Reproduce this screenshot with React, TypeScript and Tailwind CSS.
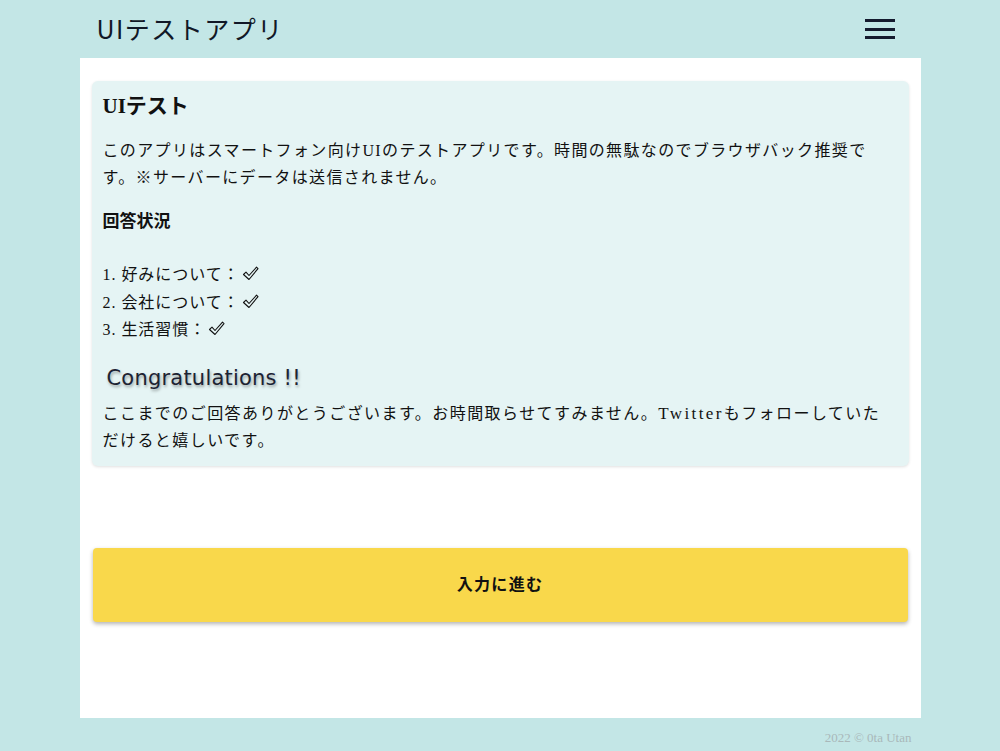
const serif = "font-['Liberation_Serif','Noto_Sans_CJK_JP',serif]"

const answers = ["好みについて", "会社について", "生活習慣"]

// アウトラインのチェックマーク
function Check() {
  return (
    <svg width="17" height="15" viewBox="0 0 17 15" className="ml-[2px] inline-block align-[-1px]">
      <path
        d="M1.5 8.5 L4 6.2 L7 9.5 L14.5 1.2 L16 2.6 L7 13.5 Z"
        fill="none"
        stroke="#111"
        strokeWidth="1.1"
        strokeLinejoin="round"
      />
    </svg>
  )
}

export default function App() {
  return (
    <div className={`min-h-[751px] bg-[#c3e6e6] text-[#111] ${serif}`}>
      {/* ヘッダー */}
      <header className="mx-auto flex h-[58px] w-[841px] items-center justify-between pl-[17px] pr-[26px]">
        <h1 className="text-[25px] tracking-[0.06em] text-[#111827] font-['Noto_Sans_CJK_JP',sans-serif] font-normal">
          UIテストアプリ
        </h1>
        <button className="flex w-[30px] flex-col gap-[5.5px]" aria-label="menu">
          <span className="h-[3px] w-full bg-[#141a2e]" />
          <span className="h-[3px] w-full bg-[#141a2e]" />
          <span className="h-[3px] w-full bg-[#141a2e]" />
        </button>
      </header>

      <main className="mx-auto flex h-[660px] w-[841px] flex-col bg-white px-3 pt-[23px]">
        <section className="rounded-md bg-[#e5f4f4] px-[11px] pb-[12px] pt-[10px] shadow-[0_1px_3px_rgba(0,0,0,0.12)]">
          <h2 className="text-[21px] font-bold leading-[30px]">UIテスト</h2>
          <p className="mt-[17px] text-[16px] leading-[26.5px] tracking-[0.085em]">
            このアプリはスマートフォン向けUIのテストアプリです。時間の無駄なのでブラウザバック推奨です。※サーバーにデータは送信されません。
          </p>
          <h3 className="mt-[17px] text-[17px] font-bold leading-[28px]">回答状況</h3>
          <ol className="mt-[25px] text-[16px] leading-[27.5px] tracking-[0.06em]">
            {answers.map((a, i) => (
              <li key={a}>
                {i + 1}. {a}：<Check />
              </li>
            ))}
          </ol>
          <h3 className="mt-[19px] pl-[4px] text-[21px] leading-[30px] tracking-[0.01em] text-[#1c2333] font-['DejaVu_Sans',sans-serif] [text-shadow:1px_2px_3px_rgba(0,0,0,0.35)]">
            Congratulations !!
          </h3>
          <p className="mt-[7px] text-[16px] leading-[27px] tracking-[0.09em]">
            ここまでのご回答ありがとうございます。お時間取らせてすみません。
            <span className="text-[17px] tracking-[0.14em]">Twitter</span>
            もフォローしていただけると嬉しいです。
          </p>
        </section>

        <button className="ml-px mt-[82px] h-[74px] w-[815px] rounded-[4px] bg-[#f9d84b] text-[16px] font-bold tracking-[0.08em] shadow-[0_2px_4px_rgba(0,0,0,0.3)]">
          入力に進む
        </button>
      </main>

      <footer className="mx-auto w-[841px] pr-[9px] pt-[10px] text-right text-[13px] text-[#a9b8ba]">
        2022 © 0ta Utan
      </footer>
    </div>
  )
}
